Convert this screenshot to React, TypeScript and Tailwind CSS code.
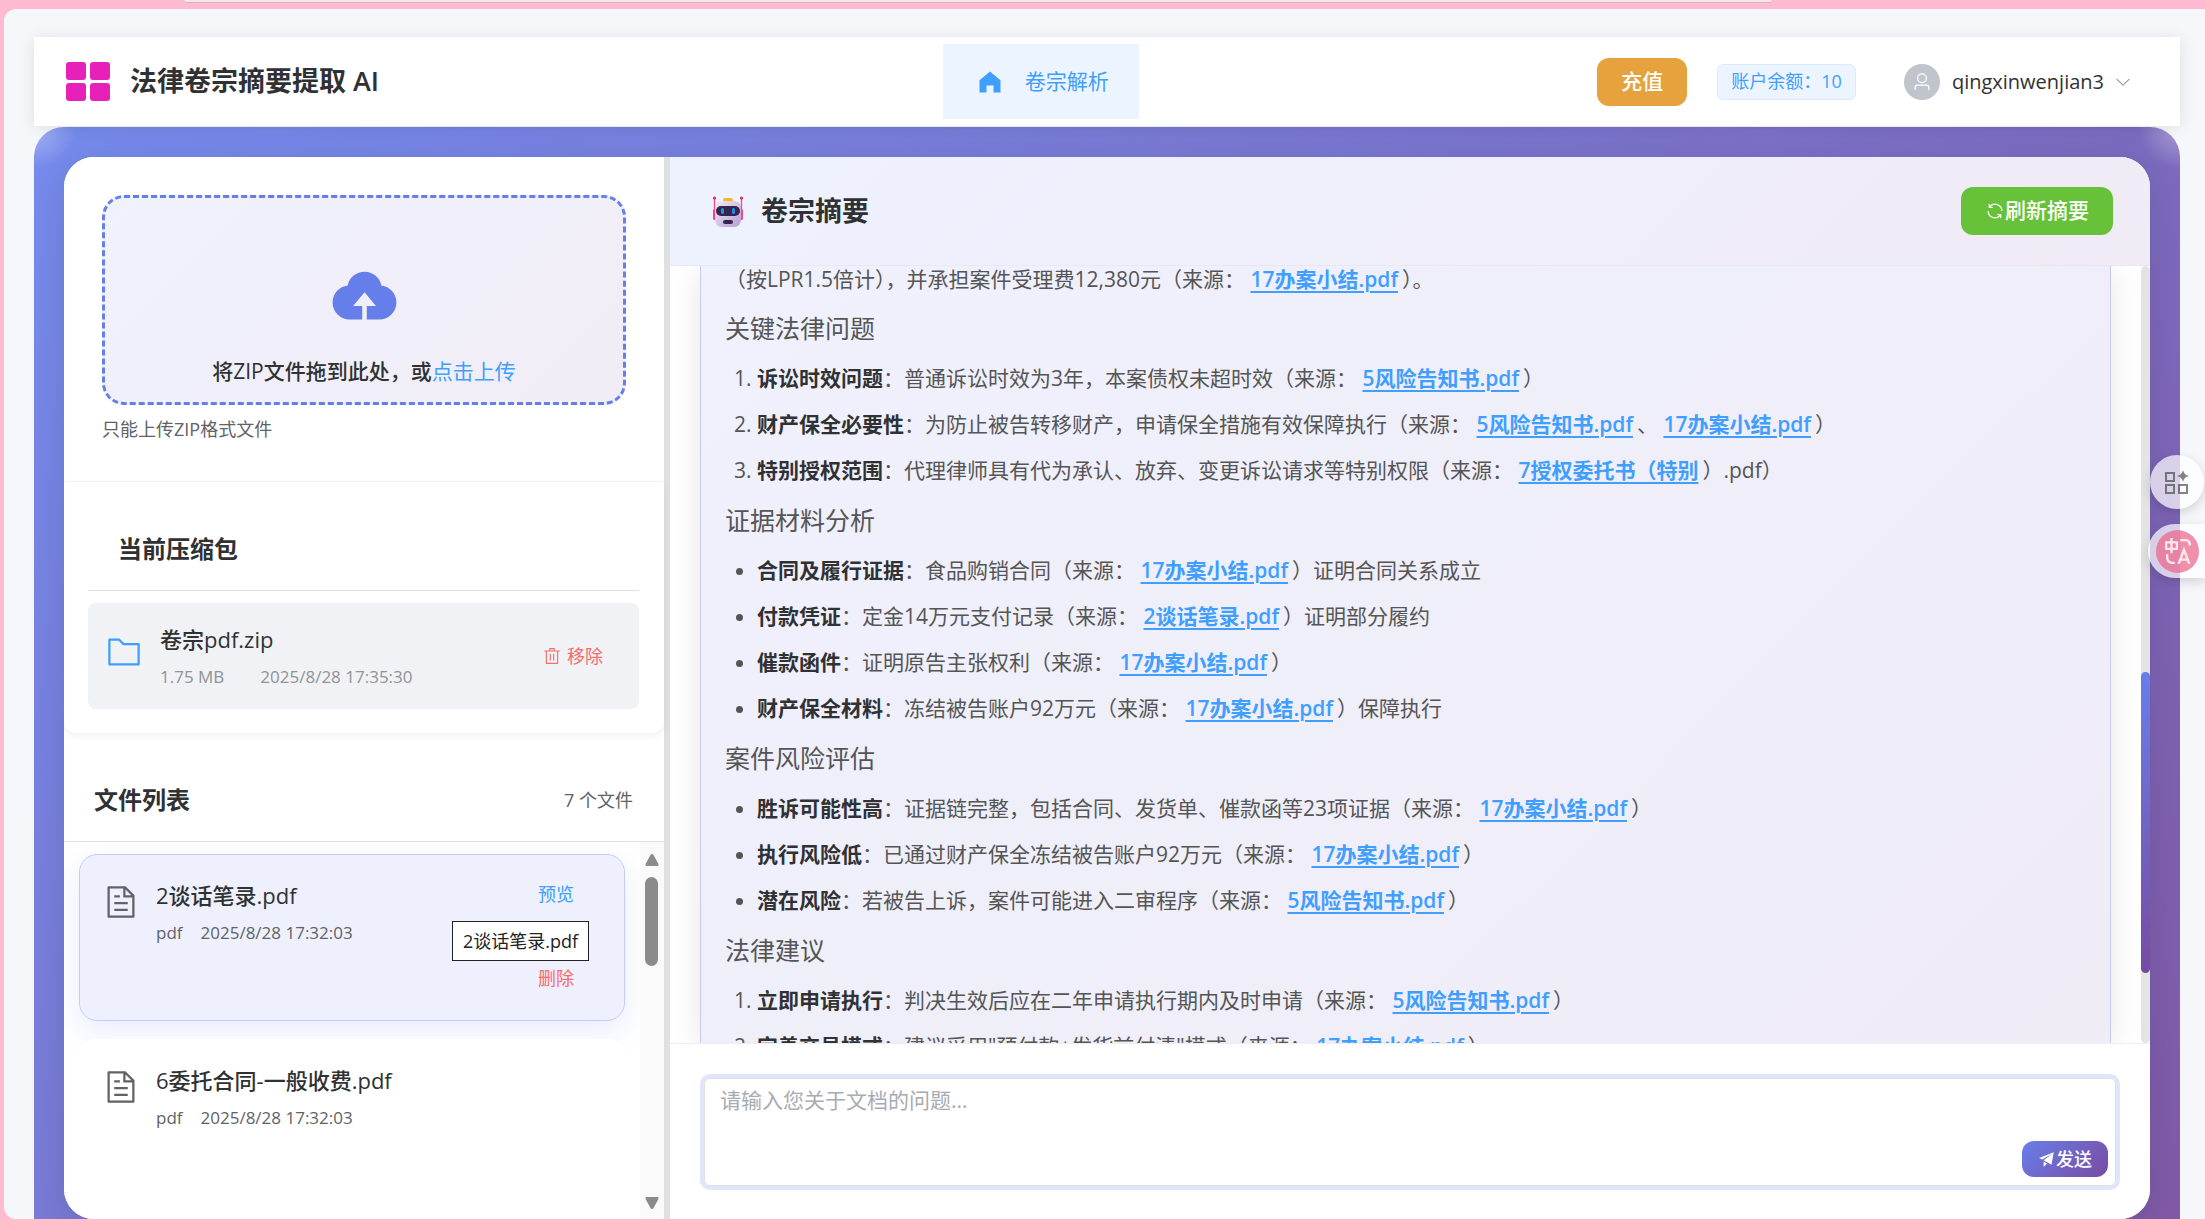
import { Fragment, ReactNode, useState } from "react"

const ICONS = {
  upload: "M544 864V672h128L512 480 352 672h128v192H320v-1.6c-5.376.32-10.496 1.6-16 1.6A240 240 0 0 1 64 624c0-123.136 93.12-223.488 212.608-237.248A239.808 239.808 0 0 1 512 192a239.872 239.872 0 0 1 235.456 194.752c119.488 13.76 212.48 114.112 212.48 237.248a240 240 0 0 1-240 240c-5.376 0-10.56-1.28-16-1.6v1.6z",
  document: "M832 384H576V128H192v768h640zm-26.496-64L640 154.496V320zM160 64h480l256 256v608a32 32 0 0 1-32 32H160a32 32 0 0 1-32-32V96a32 32 0 0 1 32-32m160 448h384v64H320zm0-192h160v64H320zm0 384h384v64H320z",
  folder: "M128 192v640h768V320H485.76L357.504 192zm-32-64h287.872l128.384 128H928a32 32 0 0 1 32 32v576a32 32 0 0 1-32 32H96a32 32 0 0 1-32-32V160a32 32 0 0 1 32-32",
  trash: "M160 256H96a32 32 0 0 1 0-64h256V95.936a32 32 0 0 1 32-32h256a32 32 0 0 1 32 32V192h256a32 32 0 1 1 0 64h-64v672a32 32 0 0 1-32 32H192a32 32 0 0 1-32-32zm448-64v-64H416v64zM224 896h576V256H224zm192-128a32 32 0 0 1-32-32V416a32 32 0 0 1 64 0v320a32 32 0 0 1-32 32m192 0a32 32 0 0 1-32-32V416a32 32 0 0 1 64 0v320a32 32 0 0 1-32 32",
  refresh: "M771.776 794.88A384 384 0 0 1 128 512h64a320 320 0 0 0 555.712 216.448H654.72a32 32 0 1 1 0-64h149.056a32 32 0 0 1 32 32v148.928a32 32 0 1 1-64 0v-50.56zM276.288 295.616h92.992a32 32 0 0 1 0 64H220.16a32 32 0 0 1-32-32V178.56a32 32 0 0 1 64 0v50.56A384 384 0 0 1 896.128 512h-64a320 320 0 0 0-555.776-216.384z",
  home: "M512 128 128 447.936V896h255.936V640H640v256h255.936V447.936z",
  send: "m64 448 832-320-128 704-446.08-243.328L832 192 242.816 545.472zm256 512V657.024L512 768z",
  user: "M512 512a192 192 0 1 0 0-384 192 192 0 0 0 0 384m0 64a256 256 0 1 1 0-512 256 256 0 0 1 0 512m320 320v-96a96 96 0 0 0-96-96H288a96 96 0 0 0-96 96v96a32 32 0 1 1-64 0v-96a160 160 0 0 1 160-160h448a160 160 0 0 1 160 160v96a32 32 0 1 1-64 0",
  arrow: "M831.872 340.864 512 652.672 192.128 340.864a30.592 30.592 0 0 0-42.752 0 29.12 29.12 0 0 0 0 41.6L489.664 714.24a32 32 0 0 0 44.672 0l340.288-331.712a29.12 29.12 0 0 0 0-41.728 30.592 30.592 0 0 0-42.752 0z",
}

function Icon({ name, className }: { name: keyof typeof ICONS; className: string }) {
  return (
    <svg viewBox="0 0 1024 1024" fill="currentColor" className={className} aria-hidden="true">
      <path d={ICONS[name]} />
    </svg>
  )
}

function Robot() {
  return (
    <svg viewBox="0 0 32 32" className="size-8" aria-hidden="true">
      <defs>
        <linearGradient id="head" x1="0" y1="0" x2="1" y2="1">
          <stop offset="0" stopColor="#f3ecf5" />
          <stop offset="1" stopColor="#b79bd6" />
        </linearGradient>
      </defs>
      <path d="M2.500 3v20M29.500 3v20" stroke="#f8457e" strokeWidth="1.3" />
      <circle cx="2.500" cy="3" r="1.6" fill="#e8274b" />
      <circle cx="29.500" cy="3" r="1.6" fill="#e8274b" />
      <rect x="1" y="14" width="3" height="11" rx="1.5" fill="#f8457e" />
      <rect x="28" y="14" width="3" height="11" rx="1.5" fill="#f8457e" />
      <rect x="11" y="3" width="10" height="6" rx="2" fill="#fbb81f" />
      <path d="M3 13c0-5 3-7 8-7h10c5 0 8 2 8 7v11c0 5-3 8-7 8H10c-4 0-7-3-7-8z" fill="url(#head)" />
      <rect x="4" y="11" width="24" height="10" rx="5" fill="#37234f" />
      <rect x="9" y="13" width="3" height="6" rx="1.5" fill="#2291dd" />
      <rect x="20" y="13" width="3" height="6" rx="1.5" fill="#2291dd" />
      <rect x="11" y="25" width="10" height="4" rx="2" fill="#37234f" />
    </svg>
  )
}

const arquivos = [
  { nome: "2谈话笔录.pdf", data: "2025/8/28 17:32:03", ativo: true },
  { nome: "6委托合同-一般收费.pdf", data: "2025/8/28 17:32:03", ativo: false },
]

function Fonte({ children }: { children: ReactNode }) {
  return (
    <a href="#fonte" className="mr-1 font-semibold text-[#409eff] underline decoration-2 underline-offset-4">
      {children}
    </a>
  )
}

interface Item {
  titulo: string
  texto: string
  fontes: string[]
  fim: string
}

const secoes: { titulo: string; numerada: boolean; itens: Item[] }[] = [
  {
    titulo: "关键法律问题",
    numerada: true,
    itens: [
      { titulo: "诉讼时效问题", texto: "普通诉讼时效为3年，本案债权未超时效", fontes: ["5风险告知书.pdf"], fim: "）" },
      { titulo: "财产保全必要性", texto: "为防止被告转移财产，申请保全措施有效保障执行", fontes: ["5风险告知书.pdf", "17办案小结.pdf"], fim: "）" },
      { titulo: "特别授权范围", texto: "代理律师具有代为承认、放弃、变更诉讼请求等特别权限", fontes: ["7授权委托书（特别"], fim: "）.pdf）" },
    ],
  },
  {
    titulo: "证据材料分析",
    numerada: false,
    itens: [
      { titulo: "合同及履行证据", texto: "食品购销合同", fontes: ["17办案小结.pdf"], fim: "）证明合同关系成立" },
      { titulo: "付款凭证", texto: "定金14万元支付记录", fontes: ["2谈话笔录.pdf"], fim: "）证明部分履约" },
      { titulo: "催款函件", texto: "证明原告主张权利", fontes: ["17办案小结.pdf"], fim: "）" },
      { titulo: "财产保全材料", texto: "冻结被告账户92万元", fontes: ["17办案小结.pdf"], fim: "）保障执行" },
    ],
  },
  {
    titulo: "案件风险评估",
    numerada: false,
    itens: [
      { titulo: "胜诉可能性高", texto: "证据链完整，包括合同、发货单、催款函等23项证据", fontes: ["17办案小结.pdf"], fim: "）" },
      { titulo: "执行风险低", texto: "已通过财产保全冻结被告账户92万元", fontes: ["17办案小结.pdf"], fim: "）" },
      { titulo: "潜在风险", texto: "若被告上诉，案件可能进入二审程序", fontes: ["5风险告知书.pdf"], fim: "）" },
    ],
  },
  {
    titulo: "法律建议",
    numerada: true,
    itens: [
      { titulo: "立即申请执行", texto: "判决生效后应在二年申请执行期内及时申请", fontes: ["5风险告知书.pdf"], fim: "）" },
      { titulo: "完善交易模式", texto: "建议采用\"预付款+发货前付清\"模式", fontes: ["17办案小结.pdf"], fim: "）" },
    ],
  },
]

function Cabecalho() {
  return (
    <header className="relative flex h-[89px] shrink-0 items-center bg-white pr-12 pl-8 shadow-[0_2px_16px_rgba(0,0,0,0.1)]">
      {/* Logo */}
      <div className="flex items-center gap-5">
        <div className="grid grid-cols-2 gap-x-1 gap-y-[3px]">
          <span className="h-[18px] w-5 rounded-[3px] bg-[#e620b8]" />
          <span className="h-[18px] w-5 rounded-[3px] bg-[#e620b8]" />
          <span className="h-[18px] w-5 rounded-[3px] bg-[#e620b8]" />
          <span className="h-[18px] w-5 rounded-[3px] bg-[#e620b8]" />
        </div>
        <h1 className="text-[27px] font-semibold text-[#303133]">法律卷宗摘要提取 AI</h1>
      </div>

      {/* Menu */}
      <nav className="flex flex-1 justify-center pl-[105px]">
        <a href="#analise" className="flex h-[75px] items-center gap-[21px] bg-[#ecf5ff] pr-[30px] pl-[33px] text-[21px] text-[#409eff]">
          <Icon name="home" className="size-7" />
          卷宗解析
        </a>
      </nav>

      {/* Conta */}
      <div className="flex items-center">
        <button type="button" className="h-12 rounded-xl bg-[#e6a23c] px-6 text-[21px] font-medium text-white">充值</button>
        <span className="ml-[30px] flex h-9 items-center rounded-md border border-[#d9ecff] bg-[#ecf5ff] px-[13px] text-[18px] text-[#409eff]">
          账户余额：10
        </span>
        <button type="button" className="ml-12 flex items-center text-[20px] text-[#303133]">
          <span className="mr-3 flex size-9 items-center justify-center rounded-full bg-[#c0c4cc] text-white">
            <Icon name="user" className="size-5" />
          </span>
          qingxinwenjian3
          <Icon name="arrow" className="ml-2.5 size-[18px] text-[#909399]" />
        </button>
      </div>
    </header>
  )
}

function PainelArquivos() {
  return (
    <aside className="flex w-[600px] shrink-0 flex-col bg-white">
      {/* Upload */}
      <section className="h-[325px] shrink-0 border-b border-[#f2f2f2] px-[38px] pt-[38px]">
        <div className="flex h-[210px] flex-col items-center rounded-[22px] border-3 border-dashed border-[#667eea] bg-linear-135 from-[#667eea]/10 to-[#764ba2]/10 pt-[60px]">
          <Icon name="upload" className="size-[73px] text-[#667eea]" />
          <p className="mt-6 text-[21px] leading-8 font-medium text-[#303133]">
            将ZIP文件拖到此处，或
            <button type="button" className="font-normal text-[#409eff]">点击上传</button>
          </p>
        </div>
        <p className="mt-2.5 text-[18px] leading-7 text-[#606266]">只能上传ZIP格式文件</p>
      </section>

      {/* Pacote atual */}
      <section className="relative shrink-0 rounded-b-xl pr-[25px] pb-6 pl-6 shadow-[0_3px_8px_rgba(0,0,0,0.06)]">
        <h3 className="h-[109px] border-b border-[#dcdfe6] pt-[49px] pl-[30px] text-2xl leading-9 font-bold text-[#303133]">当前压缩包</h3>
        <div className="mt-3 flex h-[106px] items-center rounded-lg bg-[#f0f2f5] pr-9 pl-[18px]">
          <Icon name="folder" className="mb-2 size-9 text-[#409eff]" />
          <div className="ml-[18px] flex-1 pt-0.5">
            <p className="text-[22px] leading-8 font-medium text-[#303133]">卷宗pdf.zip</p>
            <p className="mt-2 flex gap-9 text-[17px] leading-7 text-[#909399]">
              <span>1.75 MB</span>
              <span>2025/8/28 17:35:30</span>
            </p>
          </div>
          <button type="button" className="flex items-center gap-1.5 text-[18px] text-[#f56c6c]">
            <Icon name="trash" className="size-[18px]" />
            移除
          </button>
        </div>
      </section>

      {/* Lista de arquivos */}
      <div className="flex h-[109px] shrink-0 items-center justify-between border-b border-[#dcdfe6] pt-[26px] pr-[31px] pl-[30px]">
        <h3 className="text-2xl font-bold text-[#303133]">文件列表</h3>
        <span className="text-[18px] text-[#606266]">7 个文件</span>
      </div>
      <div className="flex min-h-0 flex-1">
        <ul className="flex min-h-0 flex-1 flex-col gap-[18px] overflow-hidden px-[15px] pt-3">
          {arquivos.map((a) => (
            <li
              key={a.nome}
              className={
                a.ativo
                  ? "relative flex h-[167px] shrink-0 rounded-[18px] border border-[#c2ccf8] bg-[#eef1fd] pt-6 pr-[50px] pl-[23px] shadow-[0_10px_30px_rgba(102,126,234,0.15)]"
                  : "relative flex h-[167px] shrink-0 rounded-[18px] border border-transparent bg-white pt-6 pr-[50px] pl-[23px]"
              }
            >
              <Icon name="document" className="mt-[5px] size-9 text-[#606266]" />
              <div className="ml-[17px] flex-1">
                <p className="text-[22px] leading-8 font-medium text-[#303133]">{a.nome}</p>
                <p className="mt-2 flex gap-[18px] text-[17px] leading-7 text-[#606266]">
                  <span>pdf</span>
                  <span>{a.data}</span>
                </p>
              </div>
              {a.ativo && (
                <div className="flex flex-col gap-14 pt-px text-[18px] leading-7">
                  <button type="button" className="text-[#409eff]">预览</button>
                  <button type="button" className="text-[#f56c6c]">删除</button>
                </div>
              )}
              {a.ativo && (
                <span role="tooltip" className="absolute top-[66px] right-[35px] flex h-10 items-center border border-[#222] bg-white px-[10px] text-[18px] text-[#222]">
                  {a.nome}
                </span>
              )}
            </li>
          ))}
        </ul>
        {/* Barra de rolagem */}
        <div className="flex w-6 flex-col items-center bg-[#fafafa] pt-3 pr-px pb-2.5 text-[#8b8b8b]">
          <svg viewBox="0 0 14 12" className="h-3 w-3.5" fill="currentColor"><path d="M7 0q1 0 1.500 1l5 9q.5 2-1 2h-11q-1.500 0-1-2l5-9Q6 0 7 0z" /></svg>
          <span className="mt-[11px] h-[89px] w-[13px] rounded-full bg-[#8b8b8b]" />
          <svg viewBox="0 0 14 12" className="mt-auto h-3 w-3.5" fill="currentColor"><path d="M7 12q1 0 1.500-1l5-9q.5-2-1-2h-11q-1.500 0-1 2l5 9q.5 1 1.500 1z" /></svg>
        </div>
      </div>
    </aside>
  )
}

function Resumo() {
  return (
    <div className="flex min-h-0 flex-1 overflow-hidden bg-white">
      <article className="ml-[30px] flex-1 border-x border-[#c5cbf5] bg-linear-135 from-[#eff1fd] to-[#efecf6] px-6 text-[21px] text-[#555] shadow-[0_4px_30px_rgba(0,0,0,0.1)]">
        <p className="h-[35px] leading-[26px]">
          （按LPR1.5倍计），并承担案件受理费12,380元（来源： <Fonte>17办案小结.pdf</Fonte>）。
        </p>
        {secoes.map((s) => {
          const Lista = s.numerada ? "ol" : "ul"
          return (
            <section key={s.titulo}>
              <h4 className="text-[25px] leading-[54px]">{s.titulo}</h4>
              <Lista className={s.numerada ? "list-decimal pl-8" : "list-disc pl-8"}>
                {s.itens.map((item) => (
                  <li key={item.titulo} className="leading-[46px] whitespace-nowrap">
                    <strong className="font-bold text-[#303133]">{item.titulo}</strong>：{item.texto}（来源：{" "}
                    {item.fontes.map((f, i) => (
                      <Fragment key={f}>
                        {i > 0 && "、 "}
                        <Fonte>{f}</Fonte>
                      </Fragment>
                    ))}
                    {item.fim}
                  </li>
                ))}
              </Lista>
            </section>
          )
        })}
      </article>
      <div className="ml-[30px] w-[9px] rounded-full bg-[#e4e4e4] pt-[406px]">
        <div className="h-[301px] rounded-full bg-linear-to-b from-[#667eea] to-[#764ba2]" />
      </div>
    </div>
  )
}

function Flutuantes() {
  return (
    <>
      <button type="button" aria-label="工具" className="absolute top-[455px] right-px flex size-[54px] items-center justify-center rounded-full bg-white/70 text-[#333]/60 shadow-[0_4px_12px_rgba(0,0,0,0.15)]">
        <svg viewBox="0 0 24 24" className="size-6" fill="none" stroke="currentColor" strokeWidth="2">
          <path d="M1 3h8v8H1zM1 15h8v8H1zM14 15h8v8h-8z" />
          <path d="M18 0q1 5 6 6-5 1-6 6-1-5-6-6 5-1 6-6z" fill="currentColor" stroke="none" />
        </svg>
      </button>
      <button type="button" aria-label="翻译" className="absolute top-[524px] right-0 flex h-[54px] w-[57px] items-center rounded-l-full bg-white/70 pl-2 shadow-[0_4px_12px_rgba(0,0,0,0.15)]">
        <span className="flex size-[43px] items-center justify-center rounded-full bg-[#ec6188]/70 text-white/80">
          <svg viewBox="0 0 24 24" className="size-[26px]" fill="none" stroke="currentColor" strokeWidth="2.200">
            <path d="M1 4h10v6H1zM6 0v14M14 2h5q4 0 4 5M2 15v3q0 5 6 5h1M12.500 24l5-13 5 13M14 20h7" />
          </svg>
        </span>
      </button>
    </>
  )
}

function App() {
  const [pergunta, setPergunta] = useState("")

  return (
    <div className="relative flex h-screen flex-col overflow-hidden bg-[#fdbad0] pl-1 font-['Open_Sans','Noto_Sans_CJK_SC',sans-serif]">
      <div className="mr-[433px] ml-[180px] h-[3px] shrink-0 rounded-b-lg border-b border-[#d3b3be] bg-[#fde3eb]" />

      <div className="mt-1.5 flex min-h-0 flex-1 flex-col rounded-l-xl bg-[#f5f7fb] pt-7 pr-[25px] pl-[30px]">
        <Cabecalho />

        <main className="mt-px min-h-0 flex-1 rounded-t-[30px] bg-[radial-gradient(circle_at_0_0,rgba(255,255,255,0.35),transparent_42px),radial-gradient(circle_at_100%_0,rgba(255,255,255,0.35),transparent_42px),linear-gradient(135deg,#758bed,#805aa8)] px-[30px] pt-[30px]">
          <div className="flex h-full overflow-hidden rounded-[30px] bg-white shadow-[0_8px_36px_rgba(0,0,0,0.12)]">
            <PainelArquivos />
            <div className="w-1.5 shrink-0 bg-[#e0e0e0]" />

            <section className="flex min-w-0 flex-1 flex-col">
              <div className="flex h-[109px] shrink-0 items-center justify-between border-b border-[#e8e8f4] bg-linear-135 from-[#eef2ff] to-[#f0ebf5] pr-[37px] pl-[42px]">
                <h2 className="flex items-center gap-[17px] text-[27px] font-bold text-[#303133]">
                  <Robot />
                  卷宗摘要
                </h2>
                <button type="button" className="flex h-12 items-center rounded-xl bg-[#67c23a] px-6 text-[21px] font-medium text-white">
                  <Icon name="refresh" className="size-5" />
                  刷新摘要
                </button>
              </div>

              <Resumo />

              {/* Pergunta */}
              <form className="relative h-[176px] shrink-0 border-t border-[#eee] bg-white px-[34px] pt-[34px]" onSubmit={(e) => e.preventDefault()}>
                <textarea
                  aria-label="问题"
                  value={pergunta}
                  onChange={(e) => setPergunta(e.target.value)}
                  placeholder="请输入您关于文档的问题..."
                  className="block h-[108px] w-full resize-none rounded-md border border-[#dcdfe6] px-[15px] py-1.5 text-[21px] leading-[30px] ring-4 ring-[#e0e5fb] placeholder:text-[#a8abb2] focus:outline-none"
                />
                <button type="submit" className="absolute right-[42px] bottom-[42px] flex h-9 items-center rounded-xl bg-linear-135 from-[#667eea] to-[#764ba2] px-4 text-[18px] font-medium text-white">
                  <Icon name="send" className="size-[18px]" />
                  发送
                </button>
              </form>
            </section>
          </div>
        </main>
      </div>

      <Flutuantes />
    </div>
  )
}

export default App
